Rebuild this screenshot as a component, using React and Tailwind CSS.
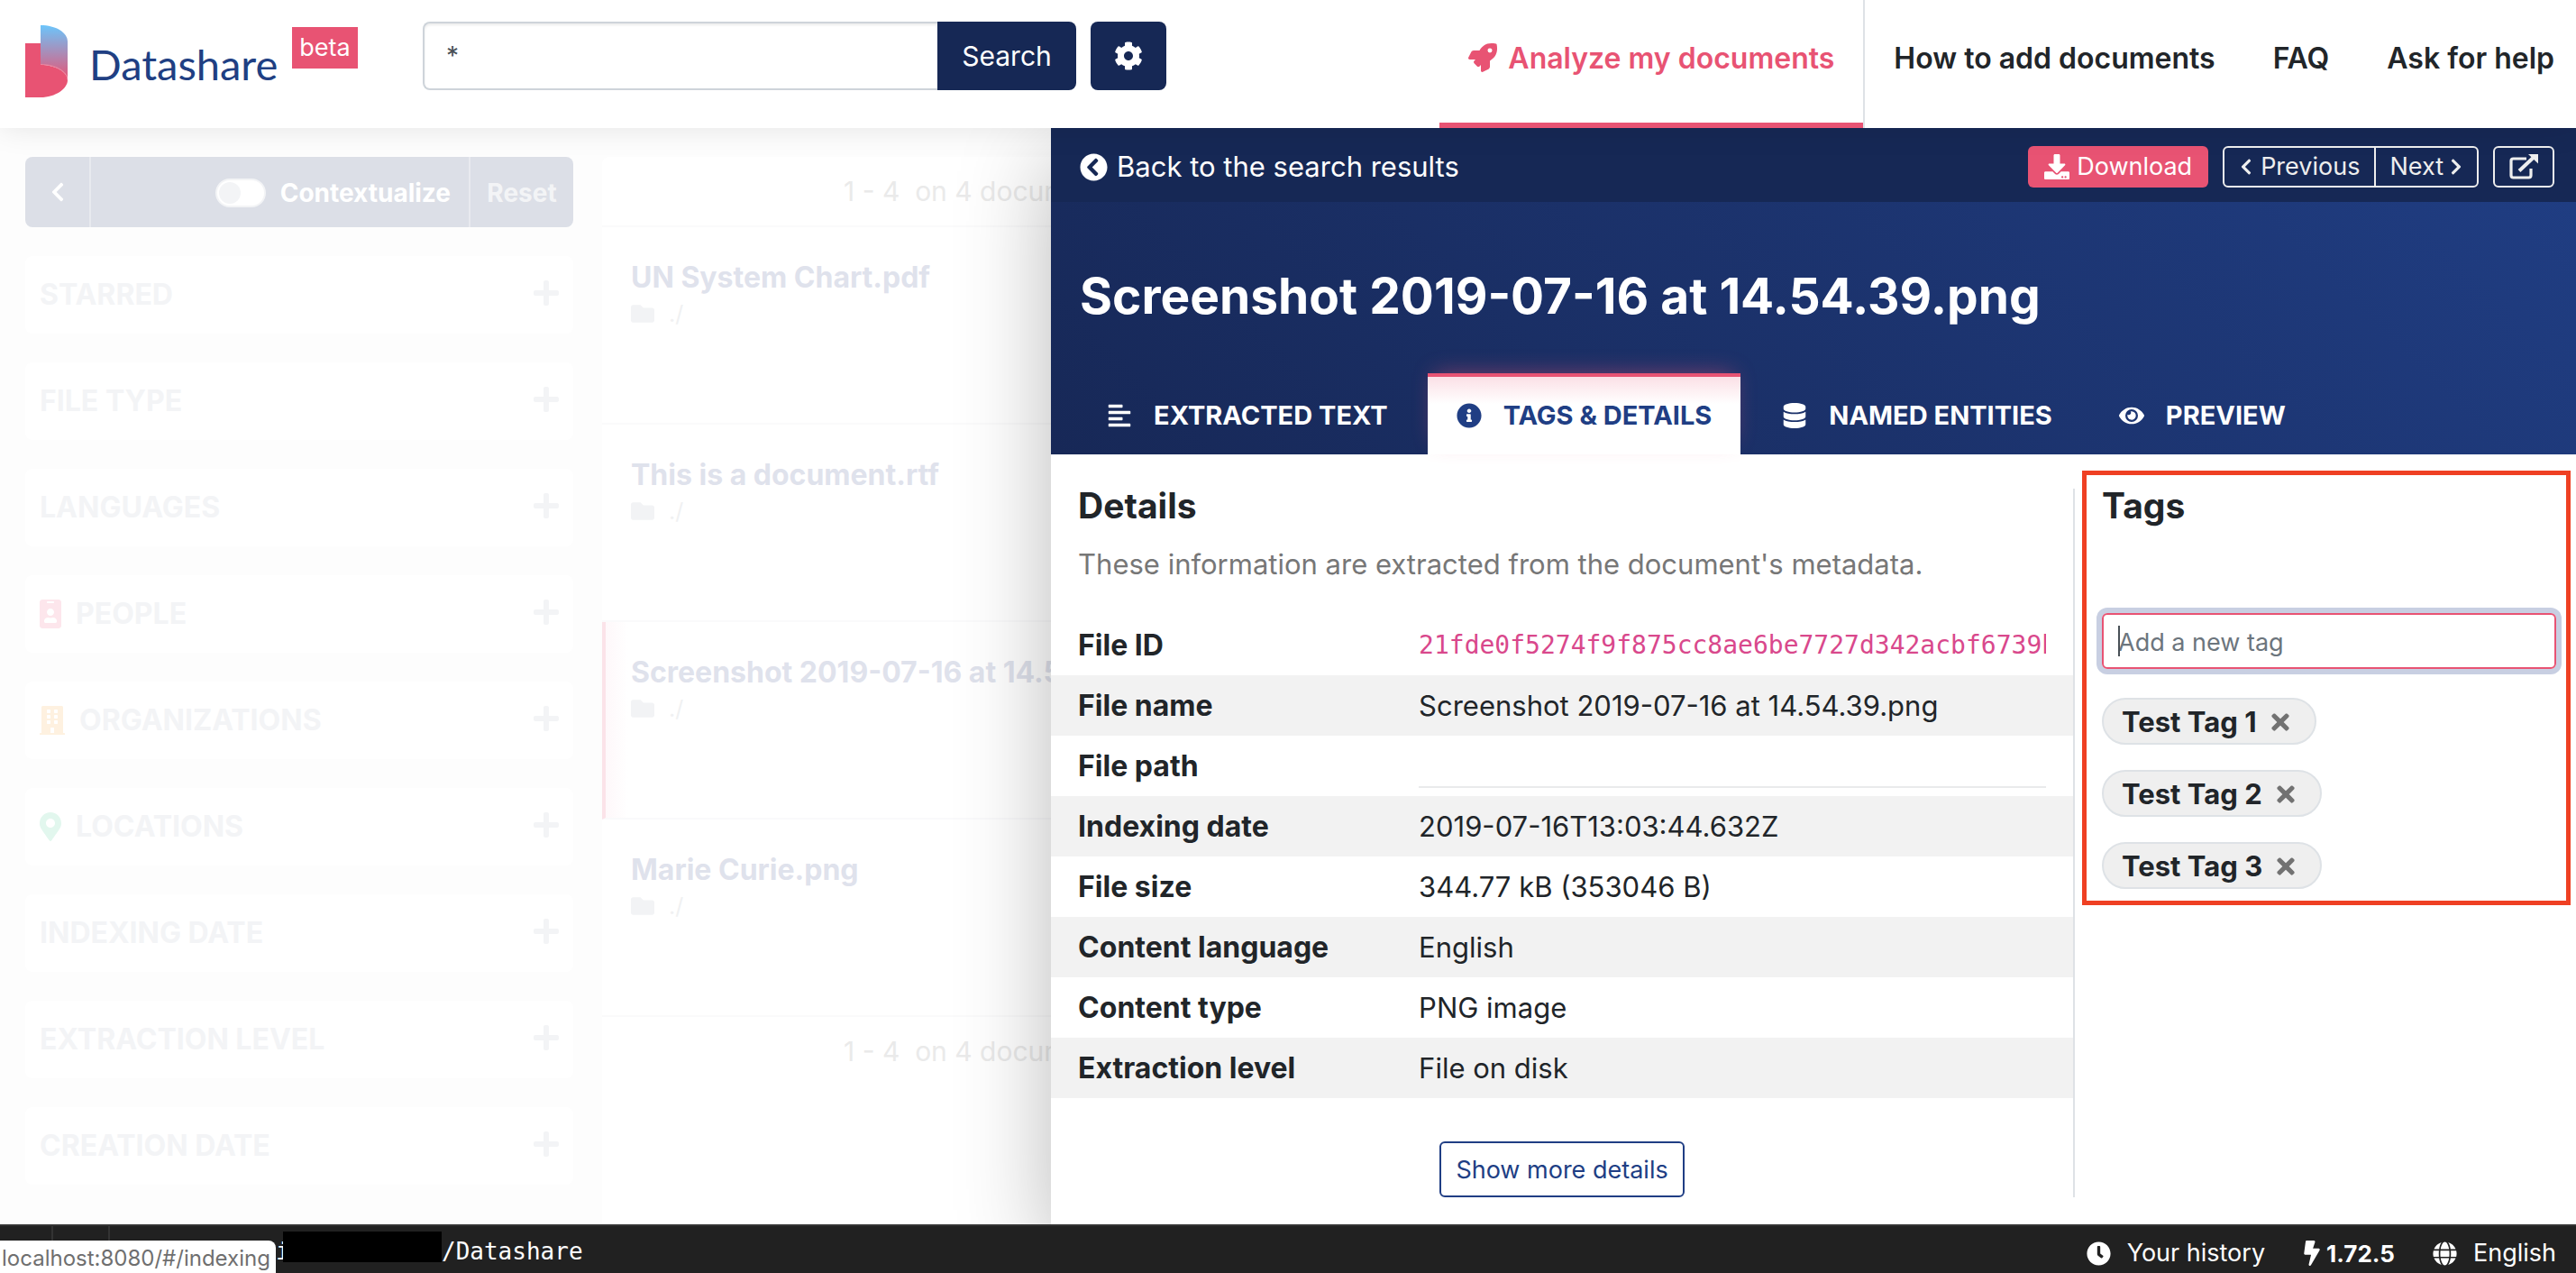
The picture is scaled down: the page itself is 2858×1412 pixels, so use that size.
import React from "react";
import {
  FaAlignLeft, FaBolt, FaBuilding, FaChevronCircleLeft, FaChevronLeft, FaChevronRight,
  FaClock, FaCog, FaDatabase, FaDownload, FaEye, FaFolder, FaGlobe, FaIdBadge,
  FaInfoCircle, FaMapMarkerAlt, FaPlus, FaRocket, FaTimes,
} from "react-icons/fa";

const FILTERS = [
  { label: "Starred" },
  { label: "File type" },
  { label: "Languages" },
  { label: "People", Icon: FaIdBadge, tone: "w-6 text-[#fde6ec]" },
  { label: "Organizations", Icon: FaBuilding, tone: "w-7 text-[#fef1e0]" },
  { label: "Locations", Icon: FaMapMarkerAlt, tone: "w-6 text-[#e2f7ee]" },
  { label: "Indexing date" },
  { label: "Extraction level" },
  { label: "Creation date" },
];

const RESULTS = [
  { name: "UN System Chart.pdf" },
  { name: "This is a document.rtf" },
  { name: "Screenshot 2019-07-16 at 14.54.39.png", active: true },
  { name: "Marie Curie.png" },
];

const TABS = [
  { label: "Extracted text", Icon: FaAlignLeft },
  { label: "Tags & details", Icon: FaInfoCircle, active: true },
  { label: "Named entities", Icon: FaDatabase },
  { label: "Preview", Icon: FaEye },
];

const DETAILS = [
  { label: "File ID", value: "21fde0f5274f9f875cc8ae6be7727d342acbf6739b", kind: "code" },
  { label: "File name", value: "Screenshot 2019-07-16 at 14.54.39.png" },
  { label: "File path", value: "", kind: "path" },
  { label: "Indexing date", value: "2019-07-16T13:03:44.632Z" },
  { label: "File size", value: "344.77 kB (353046 B)" },
  { label: "Content language", value: "English" },
  { label: "Content type", value: "PNG image" },
  { label: "Extraction level", value: "File on disk" },
];

const TAGS = ["Test Tag 1", "Test Tag 2", "Test Tag 3"];

function Logo() {
  return (
    <svg viewBox="0 0 47 80" className="h-20 w-[47px] shrink-0" aria-hidden="true">
      <defs>
        <linearGradient id="fold" x1="0" y1="0" x2="0" y2="1">
          <stop offset="0" stopColor="#6cc5fb" />
          <stop offset="1" stopColor="#e85373" />
        </linearGradient>
      </defs>
      <path d="M0 20h17v24c17 0 30 8 30 17S34 80 17 80H0z" fill="#e85373" />
      <path d="M17 0c17 0 30 8 30 18v43c0-9-13-17-30-17z" fill="url(#fold)" />
      <path d="M17 43.500c17 0 30 8 30 17" fill="none" stroke="#f08ba2" strokeWidth="0.8" />
    </svg>
  );
}

function ExternalIcon() {
  return (
    <svg viewBox="0 0 32 28" className="h-7 w-8" fill="none" stroke="currentColor" aria-hidden="true">
      <path d="M19 5H4.500Q2 5 2 7.500v16Q2 26 4.500 26h17q2.500 0 2.500-2.500V16" strokeWidth="3.200" />
      <path d="M11 18.500L27 3.500" strokeWidth="4" />
      <path d="M21 0h11v10.500z" fill="currentColor" stroke="none" />
    </svg>
  );
}

function Header() {
  return (
    <header className="relative z-20 flex h-[142px] shrink-0 bg-white pl-7 pr-6 shadow-[0_0_32px_rgba(0,0,0,0.1)]">
      <a href="#home" className="mt-7 flex h-20 w-[441px] shrink-0 items-start">
        <Logo />
        <span className="ml-6 mt-3.5 font-['Lato',sans-serif] text-[47px] leading-[58px] text-[#203f83]">Datashare</span>
        <span className="ml-4 mt-0.5 bg-[#e85373] px-2 text-[27px] leading-[46px] text-white">beta</span>
      </a>
      <form className="mt-6 flex h-19 w-[825px] gap-4" onSubmit={(e) => e.preventDefault()}>
        <div className="flex min-w-0 flex-1">
          <input
            type="text"
            aria-label="Search documents"
            defaultValue="*"
            className="h-full min-w-0 flex-1 rounded-l-lg border-2 border-r-0 border-[#ced4da] px-6 text-[28px] text-[#495057] shadow-[inset_0_2px_3px_rgba(0,0,0,0.08)] outline-none"
          />
          <button className="h-full w-[154px] rounded-r-lg bg-[#162855] text-[30px] text-white">Search</button>
        </div>
        <button type="button" aria-label="Search settings" className="flex h-full w-21 items-center justify-center rounded-lg bg-[#162855] text-white">
          <FaCog className="size-8" />
        </button>
      </form>
      <nav className="ml-auto flex text-[32px] font-semibold leading-[50px] text-[#212529]">
        <a href="#analyze" className="flex items-start gap-3 border-b-6 border-[#e85373] px-8 pt-10 text-[#e85373]">
          <FaRocket className="mt-2 size-8" />
          Analyze my documents
        </a>
        <a href="#add" className="border-l-2 border-[#dee2e6] px-8 pt-10">How to add documents</a>
        <a href="#faq" className="px-8 pt-10">FAQ</a>
        <a href="#help" className="pl-8 pt-10">Ask for help</a>
      </nav>
    </header>
  );
}

function Sidebar() {
  return (
    <aside className="flex w-[668px] shrink-0 flex-col gap-8 px-8 pb-11 pl-7 pt-8">
      <div className="flex h-[78px] items-stretch rounded-lg bg-[#dcdfe7] text-[28px] font-bold text-white">
        <button aria-label="Hide filters" className="flex w-[73px] items-center justify-center border-r-2 border-[#e8eaef]">
          <FaChevronLeft className="size-6" />
        </button>
        <label className="flex flex-1 items-center justify-end gap-4 pr-5 pt-0.5">
          <input type="checkbox" className="peer sr-only" />
          <span className="flex h-8 w-14 items-center rounded-full border-2 border-[#f3f4f6] bg-white px-0.5">
            <span className="size-6 rounded-full bg-[#f3f4f6]" />
          </span>
          Contextualize
        </label>
        <button className="w-[116px] border-l-2 border-[#e8eaef] pt-0.5 text-[#f3f4f6]">Reset</button>
      </div>
      {FILTERS.map(({ label, Icon, tone }) => (
        <button key={label} className="flex h-[86px] items-center rounded-lg bg-white pl-4 pr-3.5 text-[32px] font-bold uppercase text-[#f3f4f6]">
          {Icon && <Icon className={`${tone} mr-4 h-[34px]`} />}
          {label}
          <FaPlus className="mb-1 ml-auto size-8" />
        </button>
      ))}
    </aside>
  );
}

function Pager() {
  return <p className="whitespace-pre pl-[268px] text-[30px] leading-[76px] text-[#eaeaea]">1 - 4  on 4 documents</p>;
}

function Results() {
  return (
    <section className="mt-8 min-w-0 flex-1 overflow-hidden whitespace-nowrap rounded-tl-lg bg-white">
      <Pager />
      <ul className="border-t-2 border-[#fafafb]">
        {RESULTS.map(({ name, active }) => (
          <li
            key={name}
            className={
              active
                ? "h-[219px] border-b-2 border-l-4 border-b-[#fafafb] border-l-[#fbe3e9] bg-linear-to-r from-[#fef8fa] to-white to-5% pl-7 pt-8"
                : "h-[219px] border-b-2 border-[#fafafb] pl-8 pt-8"
            }
          >
            <a href="#document" className="block text-[32px] font-bold leading-[48px] text-[#dfe2ec]">{name}</a>
            <p className="flex items-center gap-4 text-[25px] leading-8 text-[#f0f1f2]">
              <FaFolder className="size-[26px] text-[#f2f3f5]" /> ./
            </p>
          </li>
        ))}
      </ul>
      <Pager />
    </section>
  );
}

function DocumentHeader() {
  const outline = "flex items-center justify-center border-2 border-[#eeeeee] ";
  return (
    <div className="bg-linear-45 from-[#172857] to-[#203e84] text-white">
      <div className="flex h-[82px] items-center bg-[#162855] pl-8 pr-6 pt-1">
        <a href="#results" className="flex items-center gap-2.5 text-[31px]">
          <FaChevronCircleLeft className="size-[31px]" />
          Back to the search results
        </a>
        <div className="ml-auto flex h-[46px] gap-4 text-[27px] text-[#eeeeee]">
          <button className="flex items-center gap-2 rounded-md bg-[#e85373] px-4.5 text-white">
            <FaDownload className="size-7" />
            Download
          </button>
          <div className="flex">
            <button className={outline + "gap-2 rounded-l-md px-4"}>
              <FaChevronLeft className="h-5 w-4" />
              Previous
            </button>
            <button className={outline + "-ml-0.5 gap-1.5 rounded-r-md px-[15px]"}>
              Next
              <FaChevronRight className="h-5 w-4" />
            </button>
          </div>
          <button aria-label="Open in a new window" className={outline + "rounded-md px-4"}>
            <ExternalIcon />
          </button>
        </div>
      </div>
      <h1 className="px-8 pt-[62px] text-[55px] font-bold leading-[84px]">Screenshot 2019-07-16 at 14.54.39.png</h1>
      <div role="tablist" className="mt-11 flex gap-4 px-8">
        {TABS.map(({ label, Icon, active }) => (
          <button
            key={label}
            role="tab"
            aria-selected={Boolean(active)}
            className={
              active
                ? "flex h-[90px] items-center gap-6 border-t-4 border-[#e85373] bg-white bg-linear-to-b from-[#fbe0e6] to-white to-35% px-8 text-[29px] font-bold uppercase text-[#203e84] shadow-[0_-8px_24px_-8px_rgba(232,83,115,0.45)]"
                : "flex h-[90px] items-center gap-6 border-t-4 border-transparent pl-[30px] pr-7 text-[29px] font-bold uppercase"
            }
          >
            <Icon className="size-7" />
            {label}
          </button>
        ))}
      </div>
    </div>
  );
}

function DetailValue({ value, kind }) {
  if (kind === "code") {
    return <code className="block overflow-hidden font-['DejaVu_Sans_Mono',monospace] text-[28px] text-[#d9488c]">{value}</code>;
  }
  if (kind === "path") {
    return (
      <div className="-mx-7 -mt-2 bg-white px-7 pt-2">
        <div className="h-12 border-b-2 border-[#e9eaec]" />
      </div>
    );
  }
  return value;
}

function Details() {
  return (
    <section className="min-w-0 flex-1 border-r-2 border-[#dee2e6]">
      <h2 className="px-[30px] text-[39px] font-bold leading-[38px]">Details</h2>
      <p className="px-[30px] pt-[22px] text-[31px] leading-[48px] text-[#777777]">
        These information are extracted from the document's metadata.
      </p>
      <table className="mt-8 w-full table-fixed text-[31px] leading-[47px]">
        <tbody>
          {DETAILS.map(({ label, value, kind }) => (
            <tr key={label} className="h-[67px] even:bg-[#f2f2f2]">
              <th scope="row" className="w-[378px] px-[30px] text-left text-[32px] font-bold">{label}</th>
              <td className="whitespace-nowrap px-[30px]">
                <DetailValue value={value} kind={kind} />
              </td>
            </tr>
          ))}
        </tbody>
      </table>
      <div className="mt-12 flex justify-center">
        <button className="h-[62px] rounded-md border-2 border-[#203e84] px-4 pt-0.5 text-[27px] text-[#203e84]">Show more details</button>
      </div>
    </section>
  );
}

function Tags() {
  return (
    <section className="relative w-[556px] shrink-0 pl-[30px] pr-[22px]">
      <div className="pointer-events-none absolute -top-5 bottom-[324px] left-2 right-1.5 border-5 border-[#ef4023]" />
      <h2 className="text-[39px] font-bold leading-[38px]">Tags</h2>
      <div className="relative mt-[100px]">
        <input
          type="text"
          aria-label="Add a new tag"
          placeholder="Add a new tag"
          className="h-[62px] w-full rounded-md border-2 border-[#e85373] px-4 pt-0.5 text-[27px] shadow-[0_0_0_6px_#c8cfe2] outline-none placeholder:text-[#6c757d]"
        />
        <span className="absolute left-4.5 top-3.5 h-[34px] w-0.5 bg-[#495057]" />
      </div>
      <ul className="mt-8 flex flex-col items-start gap-7">
        {TAGS.map((tag) => (
          <li key={tag} className="flex h-[52px] items-center gap-3 rounded-full border-2 border-[#dee2e6] bg-[#efefef] pl-5 pr-6 pt-0.5 text-[31px] font-bold">
            {tag}
            <button aria-label={`Remove ${tag}`} className="text-[#727272]">
              <FaTimes className="size-7" />
            </button>
          </li>
        ))}
      </ul>
    </section>
  );
}

function DocumentPanel() {
  return (
    <article className="relative z-10 flex w-[59.2%] shrink-0 flex-col bg-white text-[#212529] shadow-[0_32px_96px_rgba(0,0,0,0.28)]">
      <DocumentHeader />
      <div className="mb-[30px] mt-[38px] flex flex-1">
        <Details />
        <Tags />
      </div>
    </article>
  );
}

function Footer() {
  return (
    <footer className="relative z-20 flex h-[54px] shrink-0 items-center border-t-2 border-[#333333] bg-[#212121] pr-[22px] text-[27px] text-white">
      <span className="h-full w-[59px] border-r-2 border-[#333333]" />
      <span className="h-full w-[63px] border-r-2 border-[#333333]" />
      <span className="ml-[184px] flex items-start pt-1 font-['DejaVu_Sans_Mono',monospace] text-[26px] leading-[44px]">
        <span className="w-2 overflow-hidden">i</span>
        <span className="h-[34px] w-[176px] bg-black" />
        /Datashare
      </span>
      <div className="ml-auto flex items-center gap-[42px] pt-2">
        <a href="#history" className="flex items-center gap-[18px]">
          <FaClock className="size-[27px]" /> Your history
        </a>
        <span className="flex items-center gap-1.5 text-[26px] font-bold">
          <FaBolt className="h-7 w-5" /> 1.72.5
        </span>
        <button className="flex items-center gap-[18px]">
          <FaGlobe className="size-[27px]" /> English
        </button>
      </div>
      <span className="absolute bottom-0 left-0 rounded-tr-lg bg-white pl-0.5 pr-1.5 pt-1 text-2xl leading-8 text-[#6f6f6f]">
        localhost:8080/#/indexing
      </span>
    </footer>
  );
}

export default function App() {
  return (
    <div className="flex min-h-screen flex-col bg-[#fdfdfd] font-['Inter',sans-serif]">
      <Header />
      <main className="flex flex-1">
        <Sidebar />
        <Results />
        <DocumentPanel />
      </main>
      <Footer />
    </div>
  );
}
